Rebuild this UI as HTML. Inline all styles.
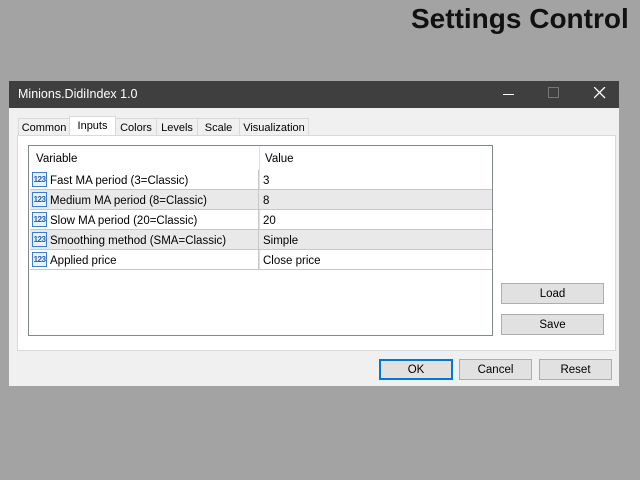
<!DOCTYPE html>
<html><head><style>
body{margin:0;width:640px;height:480px;background:#a3a3a3;position:relative;overflow:hidden;font-family:"Liberation Sans",sans-serif;font-size:11.5px;color:#000}
.abs{position:absolute}
.h1{left:411px;top:3px;font-size:28px;font-weight:bold;color:#111;white-space:nowrap;letter-spacing:0}
.win{left:9px;top:81px;width:610px;height:305px;background:#f0f0f0}
.title{left:0;top:0;width:610px;height:27px;background:#3f3f3f;color:#fff;font-size:12.5px}
.tab{top:37px;height:17px;border:1px solid #d9d9d9;border-bottom:none;background:#f0f0f0;line-height:18px;text-align:center;font-size:11px}
.panel{left:8px;top:54px;width:597px;height:214px;background:#fff;border:1px solid #d9d9d9}
.list{left:19px;top:64px;width:463px;height:189px;border:1px solid #828790;background:#fff}
.row{position:absolute;left:1px;width:462px;height:19px;border-bottom:1px solid #c8c8c8;line-height:22px}
.row span{position:absolute}
.btn{height:19px;border:1px solid #adadad;background:#e1e1e1;text-align:center;line-height:20px;font-size:11.5px}
.ic{position:absolute;left:2px;top:2px;width:15px;height:15px;border:1px solid #3b7fd0;background:#e7f1fb;color:#1d5fb6;font-size:8px;line-height:14px;font-weight:bold;box-sizing:border-box;text-align:center;letter-spacing:-0.5px}
</style></head><body>
<div class="abs h1">Settings Control</div>
<div class="abs win">
 <div class="abs title"><span class="abs" style="left:9px;top:6px">Minions.DidiIndex 1.0</span>
  <div class="abs" style="left:494px;top:13px;width:11px;height:1px;background:#fff"></div>
  <div class="abs" style="left:539px;top:6px;width:9px;height:9px;border:1px solid #777"></div>
  <svg class="abs" style="left:585px;top:6px" width="12" height="12"><path d="M0 0L11 11M11 0L0 11" stroke="#fff" stroke-width="1.3"/></svg>
 </div>
 <div class="abs tab" style="left:9px;width:50px">Common</div>
 <div class="abs tab" style="left:60px;width:45px;top:35px;height:19px;background:#fff">Inputs</div>
 <div class="abs tab" style="left:106px;width:40px">Colors</div>
 <div class="abs tab" style="left:147px;width:40px">Levels</div>
 <div class="abs tab" style="left:188px;width:41px">Scale</div>
 <div class="abs tab" style="left:230px;width:68px">Visualization</div>
 <div class="abs panel"></div>
 <div class="abs list">
  <div class="abs" style="left:230px;top:0;width:1px;height:124px;background:#e0e0e0"></div>
  <div class="row" style="top:0;height:24px;border:none;line-height:26px"><span style="left:6px;top:0">Variable</span><span style="left:235px;top:0">Value</span></div>
  <div class="row" style="top:24px"><div class="ic">123</div><span style="left:20px">Fast MA period (3=Classic)</span><span style="left:233px">3</span></div>
  <div class="row" style="top:44px;background:#e9e9e9"><div class="ic">123</div><span style="left:20px">Medium MA period (8=Classic)</span><span style="left:233px">8</span></div>
  <div class="row" style="top:64px"><div class="ic">123</div><span style="left:20px">Slow MA period (20=Classic)</span><span style="left:233px">20</span></div>
  <div class="row" style="top:84px;background:#e9e9e9"><div class="ic">123</div><span style="left:20px">Smoothing method (SMA=Classic)</span><span style="left:233px">Simple</span></div>
  <div class="row" style="top:104px"><div class="ic">123</div><span style="left:20px">Applied price</span><span style="left:233px">Close price</span></div>
  <div class="abs" style="left:229px;top:24px;width:1px;height:100px;background:#c8c8c8"></div>
 </div>
 <div class="abs btn" style="left:492px;top:202px;width:101px">Load</div>
 <div class="abs btn" style="left:492px;top:233px;width:101px">Save</div>
 <div class="abs btn" style="left:370px;top:278px;width:70px;border:2px solid #0078d7;height:17px;line-height:18px">OK</div>
 <div class="abs btn" style="left:450px;top:278px;width:71px">Cancel</div>
 <div class="abs btn" style="left:530px;top:278px;width:71px">Reset</div>
</div>
</body></html>
